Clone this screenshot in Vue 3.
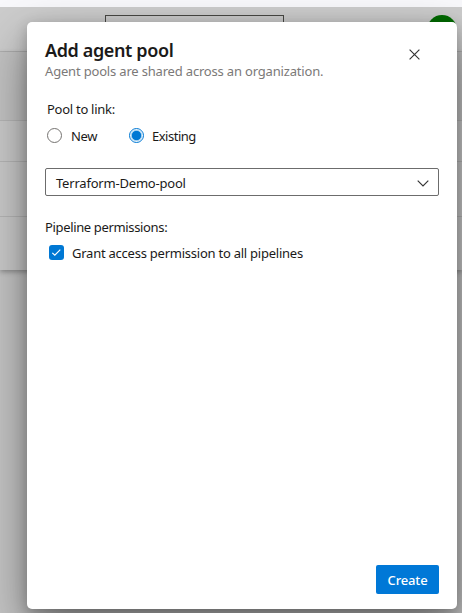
<script setup>
import { ref } from 'vue'

const mode = ref('existing')
const options = [
  { id: 'new', label: 'New' },
  { id: 'existing', label: 'Existing' },
]
const granted = ref(true)
</script>

<template>
  <div class="page">
    <div class="browser-strip"></div>
    <header class="header">
      <div class="search"></div>
      <div class="avatar"></div>
    </header>
    <div class="list">
      <div class="row row-head"></div>
      <div class="row row-a"></div>
      <div class="row row-b"></div>
      <div class="row row-c"></div>
    </div>

    <section class="dialog" role="dialog">
      <div class="title-bar">
        <div>
          <h1 class="title">Add agent pool</h1>
          <p class="subtitle">Agent pools are shared across an organization.</p>
        </div>
        <button class="close" aria-label="Close">
          <svg width="11" height="11" viewBox="0 0 11 11"><path d="M.6.6l9.8 9.8M10.4.6L.6 10.4" /></svg>
        </button>
      </div>

      <div class="label pool-label">Pool to link:</div>
      <div class="radios">
        <div v-for="o in options" :key="o.id" class="radio" @click="mode = o.id">
          <span class="circle" :class="{ on: mode === o.id }"></span>
          <span :class="'text-' + o.id">{{ o.label }}</span>
        </div>
      </div>

      <div class="select">
        <span class="value">Terraform-Demo-pool</span>
        <svg width="12" height="7" viewBox="0 0 12 7"><path d="M.7.7L6 6L11.3.7" /></svg>
      </div>

      <div class="label perm-label">Pipeline permissions:</div>
      <div class="check" @click="granted = !granted">
        <span class="box">
          <svg v-if="granted" width="15" height="15" viewBox="0 0 15 15"><path d="M3.3 7.8l2.5 2.4 5.5-5.6" /></svg>
        </span>
        <span class="grant">Grant access permission to all pipelines</span>
      </div>

      <footer class="footer">
        <button class="create"><span>Create</span></button>
      </footer>
    </section>
  </div>
</template>

<style>
body {
  margin: 0;
}
</style>

<style scoped>
.page {
  position: relative;
  width: 462px;
  height: 613px;
  overflow: hidden;
  background: #c4c4c4;
  color: #1b1a19;
  font: 13px/18px "Noto Sans", "Open Sans", sans-serif;
}
.page * {
  box-sizing: border-box;
}
.browser-strip {
  height: 7px;
  background: #f8f8fb;
}
.header {
  display: flex;
  justify-content: space-between;
  height: 45px;
  padding: 8px 5px 0 105px;
  overflow: hidden;
  background: #cccccc;
  border-bottom: 1px solid #b5b5b5;
}
.search {
  width: 179px;
  height: 30px;
  border: 1px solid #484844;
}
.avatar {
  width: 30px;
  height: 30px;
  border-radius: 50%;
  background: #006b00;
}
.list {
  height: 218px;
  background: #c9c9c9;
  box-shadow: 0 2px 5px rgba(0, 0, 0, 0.3);
}
.row {
  border-bottom: 1px solid #b5b5b5;
}
.row-head {
  height: 69px;
  background: #c2c2c2;
}
.row-a {
  height: 41px;
}
.row-b {
  height: 55px;
}
.row-c {
  height: 53px;
  border-bottom: 0;
}
.dialog {
  position: absolute;
  left: 27px;
  top: 22px;
  display: flex;
  flex-direction: column;
  width: 430px;
  height: 587px;
  padding: 17px 18px 15px;
  border-radius: 5px;
  background: #fff;
  box-shadow: 0 20px 48px rgba(0, 0, 0, 0.42), 0 4px 14px rgba(0, 0, 0, 0.22);
}
.title-bar {
  display: flex;
  justify-content: space-between;
  height: 61px;
}
.title {
  margin: 0;
  font-size: 18px;
  font-weight: 600;
  line-height: 23px;
  letter-spacing: -0.38px;
  white-space: nowrap;
}
.subtitle {
  margin: 0;
  color: #7b7978;
  letter-spacing: -0.18px;
  white-space: nowrap;
}
.close {
  width: 11px;
  height: 11px;
  margin: 10px 19px 0 0;
  padding: 0;
  border: 0;
  background: none;
}
svg {
  display: block;
  flex: none;
  fill: none;
  stroke: #333;
  stroke-width: 1.15;
}
.label {
  height: 18px;
}
.pool-label {
  padding-left: 2px;
  letter-spacing: -0.27px;
}
.radios {
  display: flex;
  gap: 31px;
  margin-top: 9px;
  padding-left: 2px;
}
.radio {
  display: flex;
  align-items: flex-start;
  gap: 9px;
  height: 18px;
}
.text-new {
  width: 27px;
  letter-spacing: -0.4px;
}
.text-existing {
  letter-spacing: -0.5px;
}
.circle {
  width: 15px;
  height: 15px;
  margin-top: 1px;
  border: 1px solid #757371;
  border-radius: 50%;
}
.circle.on {
  margin-right: -1px;
  border-color: #0078d4;
  background: radial-gradient(circle, #0078d4 4.3px, #9ccdf0 5px, #c7e0f4 5.6px, #fff 6.3px);
}
.select {
  display: flex;
  align-items: center;
  justify-content: space-between;
  height: 28px;
  margin-top: 23px;
  padding: 2px 9px 0 10px;
  border: 1px solid #6c6c6c;
  border-radius: 2px;
}
.value {
  letter-spacing: -0.2px;
}
.perm-label {
  margin-top: 22px;
  letter-spacing: -0.35px;
}
.check {
  display: flex;
  align-items: flex-start;
  gap: 8px;
  height: 18px;
  margin-top: 8px;
  padding-left: 4px;
}
.box {
  width: 15px;
  height: 15px;
  margin-top: 1px;
  border-radius: 3px;
  background: #0078d4;
}
.box svg {
  stroke: #fff;
}
.grant {
  letter-spacing: -0.24px;
}
.footer {
  display: flex;
  justify-content: flex-end;
  margin-top: auto;
}
.create {
  width: 63px;
  height: 29px;
  padding: 1px 0 0;
  border: 0;
  border-radius: 2px;
  background: #0078d7;
  color: #fff;
  font: 500 13px/28px "Noto Sans", "Open Sans", sans-serif;
  letter-spacing: -0.15px;
}
</style>
